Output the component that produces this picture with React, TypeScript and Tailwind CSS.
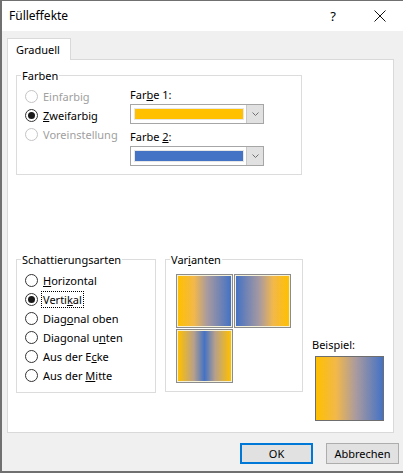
import React from "react";

const yellow = "#ffc000";
const blue = "#4472c4";

function Radio({
  label,
  checked = false,
  disabled = false,
  focus = false,
}: {
  label: React.ReactNode;
  checked?: boolean;
  disabled?: boolean;
  focus?: boolean;
}) {
  return (
    <div className="flex h-[19px] items-center">
      <span
        className={`flex h-[13px] w-[13px] shrink-0 items-center justify-center rounded-full border bg-white ${
          disabled ? "border-[#c4c4c4]" : "border-[#333333]"
        }`}
      >
        {checked && <span className="h-[7px] w-[7px] rounded-full bg-[#1a1a1a]" />}
      </span>
      <span
        className={`ml-[3px] border px-[1px] leading-[15px] ${
          focus ? "border-dotted border-black" : "border-transparent"
        } ${disabled ? "text-[#a0a0a0]" : "text-black"}`}
      >
        {label}
      </span>
    </div>
  );
}

function ColorSelect({ color }: { color: string }) {
  return (
    <div className="flex h-[20px] w-[134px] border border-[#a6a6a6] bg-white">
      <div className="flex-1 py-[3px] pl-[3px] pr-[2px]">
        <div className="h-full border border-[#e6e6e6]" style={{ backgroundColor: color }} />
      </div>
      <div className="flex w-[17px] items-center justify-center border-l border-[#c8c8c8] bg-[#e1e1e1]">
        <svg width="7" height="4" viewBox="0 0 7 4">
          <path d="M0.5 0.5 L3.5 3.5 L6.5 0.5" fill="none" stroke="#707070" strokeWidth="1" />
        </svg>
      </div>
    </div>
  );
}

function GroupLabel({ children }: { children: React.ReactNode }) {
  return (
    <span className="-mt-[8px] ml-[4px] block w-fit bg-white px-[1px] leading-[15px]">{children}</span>
  );
}

function Tile({ gradient }: { gradient: string }) {
  return (
    <div className="h-[54px] w-[57px] border border-[#8c8c8c] bg-[#f5f0d8] p-px">
      <div className="h-full w-full" style={{ background: gradient }} />
    </div>
  );
}

export default function App() {
  return (
    <div className="flex h-[473px] w-[403px] flex-col border-b-2 border-l-2 border-t border-[#707070] bg-[#f0f0f0] font-['Noto_Sans',sans-serif] text-[11px] text-black">
      {/* title bar */}
      <div className="flex h-[30px] shrink-0 items-center bg-white pl-[7px] text-[12px]">
        <span className="leading-none">Fülleffekte</span>
        <span className="ml-auto mr-[38px] text-[13px] leading-none">?</span>
        <svg className="mr-[17px]" width="12" height="12" viewBox="0 0 12 12">
          <path d="M0.5 0.5 L11.5 11.5 M11.5 0.5 L0.5 11.5" stroke="#111" strokeWidth="1" />
        </svg>
      </div>

      <div className="flex flex-col pl-[5px] pt-[7px]">
        {/* tab */}
        <div className="relative z-10 -mb-px flex h-[22px] w-[64px] items-start border border-b-0 border-[#d9d9d9] bg-white pl-[8px] pt-[3px] leading-[16px]">
          Graduell
        </div>

        {/* panel */}
        <div className="flex h-[374px] w-[387px] flex-col border border-[#d9d9d9] bg-white px-[8px] pt-[15px]">
          {/* Farben */}
          <div className="flex h-[100px] w-[286px] flex-col border border-[#dcdcdc]">
            <GroupLabel>Farben</GroupLabel>
            <div className="flex pl-[8px] pt-[4px]">
              <div className="flex w-[105px] flex-col">
                <Radio label="Einfarbig" disabled />
                <Radio
                  label={
                    <>
                      <u>Z</u>weifarbig
                    </>
                  }
                  checked
                />
                <Radio label="Voreinstellung" disabled />
              </div>
              <div className="flex flex-col">
                <span className="h-[16px] leading-[16px]">
                  Far<u>b</u>e 1:
                </span>
                <div className="mt-px">
                  <ColorSelect color={yellow} />
                </div>
                <span className="mt-[5px] h-[16px] leading-[16px]">
                  Farbe <u>2</u>:
                </span>
                <div className="mt-px">
                  <ColorSelect color={blue} />
                </div>
              </div>
            </div>
          </div>

          {/* lower row */}
          <div className="mt-[84px] flex items-start">
            <div className="flex h-[134px] w-[140px] flex-col border border-[#dcdcdc]">
              <GroupLabel>Schattierungsarten</GroupLabel>
              <div className="flex flex-col pl-[8px] pt-[4px]">
                <Radio
                  label={
                    <>
                      <u>H</u>orizontal
                    </>
                  }
                />
                <Radio
                  label={
                    <>
                      Verti<u>k</u>al
                    </>
                  }
                  checked
                  focus
                />
                <Radio
                  label={
                    <>
                      Diag<u>o</u>nal oben
                    </>
                  }
                />
                <Radio
                  label={
                    <>
                      Diagonal u<u>n</u>ten
                    </>
                  }
                />
                <Radio
                  label={
                    <>
                      Aus der E<u>c</u>ke
                    </>
                  }
                />
                <Radio
                  label={
                    <>
                      Aus der <u>M</u>itte
                    </>
                  }
                />
              </div>
            </div>

            <div className="ml-[9px] flex h-[133px] w-[138px] flex-col border border-[#dcdcdc]">
              <GroupLabel>
                Var<u>i</u>anten
              </GroupLabel>
              <div className="grid w-fit grid-cols-[57px_57px] gap-[1px] pl-[10px] pt-[7px]">
                <Tile gradient={`linear-gradient(to right, ${yellow}, #f2b84a 30%, #a99aa0 55%, ${blue})`} />
                <Tile gradient={`linear-gradient(to right, ${blue}, #a99aa0 45%, #f2b84a 70%, ${yellow})`} />
                <Tile
                  gradient={`linear-gradient(to right, ${yellow}, #b7a08c 30%, ${blue} 50%, #b7a08c 70%, ${yellow})`}
                />
              </div>
            </div>

            <div className="ml-[9px] flex flex-col pt-[78px]">
              <span className="h-[16px] leading-[16px]">Beispiel:</span>
              <div
                className="ml-[3px] mt-[3px] h-[65px] w-[69px] border border-[#6e6e6e]"
                style={{
                  background: `linear-gradient(to right, ${yellow}, #f2b84a 30%, #a99aa0 60%, ${blue})`,
                }}
              />
            </div>
          </div>
        </div>

        {/* buttons */}
        <div className="mt-[10px] flex w-[392px] justify-end gap-[13px]">
          <button className="h-[21px] w-[73px] border-2 border-[#0078d7] bg-[#e1e1e1] leading-none">OK</button>
          <button className="h-[21px] w-[73px] border border-[#adadad] bg-[#e1e1e1] leading-none">
            Abbrechen
          </button>
        </div>
      </div>
    </div>
  );
}
